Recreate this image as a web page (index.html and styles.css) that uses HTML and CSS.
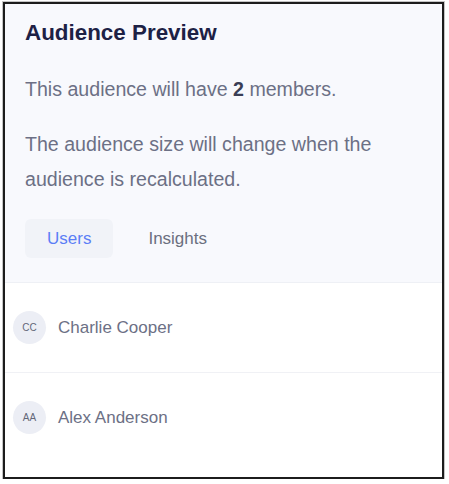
FILE: index.html
```html
<!DOCTYPE html>
<html lang="en">
<head>
	<meta charset="UTF-8">
	<title>Audience Preview</title>
	<link rel="stylesheet" href="styles.css">
</head>
<body>
	<div class="frame">
		<div class="preview-head">
			<h2 class="title">Audience Preview</h2>
			<p class="note">This audience will have <b>2</b> members.</p>
			<p class="note">The audience size will change when the audience is recalculated.</p>
			<div class="tabs">
				<button class="tab active">Users</button>
				<button class="tab">Insights</button>
			</div>
		</div>
		<ul class="members">
			<li class="member">
				<span class="avatar">CC</span>
				<span class="name">Charlie Cooper</span>
			</li>
			<li class="member">
				<span class="avatar">AA</span>
				<span class="name">Alex Anderson</span>
			</li>
		</ul>
	</div>
</body>
</html>
```

FILE: styles.css
```css
html,body{
	margin:0;
	padding:0;
	background:#fff;
	font-family:"Liberation Sans", Arial, sans-serif;
}
.frame{
	box-sizing:border-box;
	width:441px;
	height:477px;
	margin:2px 0 0 3px;
	border:2px solid #1c1c1c;
	box-shadow:0 0 0 1px #c4c4c4;
	background:#fff;
	overflow:hidden;
}
.preview-head{
	background:#f8f9fd;
	border-bottom:1px solid #eef0f5;
	padding:15px 20px 24px;
}
.title{
	margin:0 0 25px;
	font-size:22.4px;
	line-height:28px;
	font-weight:bold;
	color:#1d2145;
}
.note{
	margin:0 0 20px;
	font-size:19.6px;
	line-height:35px;
	color:#6c7085;
}
.note b{
	color:#3a3e55;
}
.tabs{
	display:flex;
	gap:13px;
	margin-top:22px;
}
.tab{
	height:39px;
	padding:0 22px;
	border:0;
	border-radius:6px;
	background:transparent;
	font-family:inherit;
	font-size:17px;
	color:#6b6f80;
}
.tab.active{
	background:#f1f3f8;
	color:#5b7ef6;
}
.members{
	list-style:none;
	margin:0;
	padding:0;
}
.member{
	display:flex;
	align-items:center;
	gap:12px;
	height:89px;
	padding-left:8px;
	border-bottom:1px solid #f0f1f5;
}
.member:last-child{
	border-bottom:0;
}
.avatar{
	display:flex;
	align-items:center;
	justify-content:center;
	width:33px;
	height:33px;
	border-radius:50%;
	background:#eceef5;
	font-size:10px;
	color:#636779;
}
.name{
	font-size:17px;
	color:#6c7085;
}
```
